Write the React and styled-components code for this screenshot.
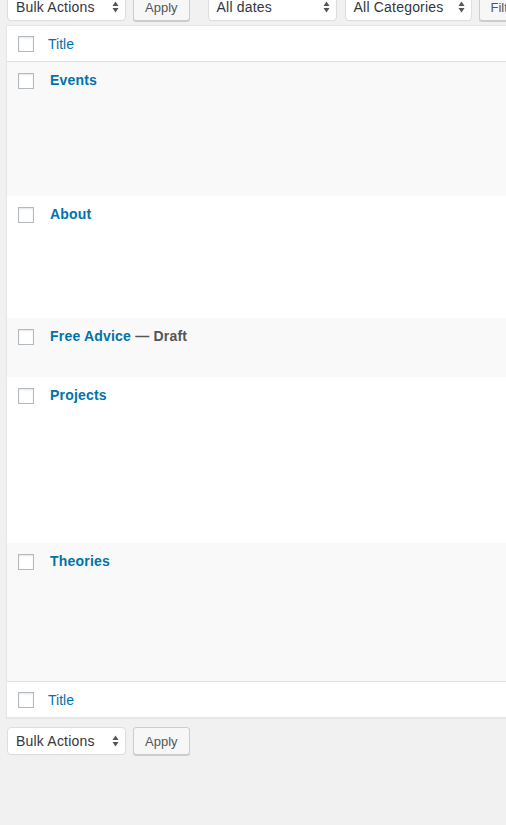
import React from 'react';
import styled, { createGlobalStyle } from 'styled-components';

const GlobalStyle = createGlobalStyle`
    html, body {
        margin: 0;
        padding: 0;
        background: #f1f1f1;
        overflow: hidden;
    }
    body {
        font-family: 'Liberation Sans', Arial, sans-serif;
        color: #444;
    }
`;

const rows = [
    { id: 1, title: 'Events', height: 134 },
    { id: 2, title: 'About', height: 122 },
    { id: 3, title: 'Free Advice', state: 'Draft', height: 59 },
    { id: 4, title: 'Projects', height: 166 },
    { id: 5, title: 'Theories', height: 138 },
];

const SelectArrows = () => (
    <svg width="7" height="12" viewBox="0 0 7 12">
        <path d="M3.5 0.5 L6.5 5 L0.5 5 Z" fill="#555" />
        <path d="M0.5 7 L6.5 7 L3.5 11.5 Z" fill="#555" />
    </svg>
);

const Dropdown = ({ label, width }) => (
    <Select width={width}>
        <span>{label}</span>
        <SelectArrows />
    </Select>
);

const App = () => {
    return (
        <Wrapper>
            <GlobalStyle />
            <TableNav top>
                <Group>
                    <Dropdown label="Bulk Actions" width={119} />
                    <Button>Apply</Button>
                </Group>
                <Group>
                    <Dropdown label="All dates" width={129} />
                    <Dropdown label="All Categories" width={127} />
                    <Button>Filter</Button>
                </Group>
            </TableNav>

            <Table>
                <HeadRow>
                    <CheckCell><Checkbox /></CheckCell>
                    <HeadTitle>Title</HeadTitle>
                </HeadRow>

                {rows.map((row, i) => (
                    <Row key={row.id} alt={i % 2 === 0} style={{ height: row.height }}>
                        <CheckCell row><Checkbox /></CheckCell>
                        <RowTitle>
                            <TitleLink>{row.title}</TitleLink>
                            {row.state && <PostState> — {row.state}</PostState>}
                        </RowTitle>
                    </Row>
                ))}

                <FootRow>
                    <CheckCell><Checkbox /></CheckCell>
                    <HeadTitle>Title</HeadTitle>
                </FootRow>
            </Table>

            <TableNav>
                <Group>
                    <Dropdown label="Bulk Actions" width={119} />
                    <Button>Apply</Button>
                </Group>
            </TableNav>
        </Wrapper>
    );
};

// Styled Components
const Wrapper = styled.div`
    width: 540px;
    min-height: 100vh;
`;

const TableNav = styled.div`
    display: flex;
    gap: 18px;
    height: 28px;
    padding-left: 7px;
    margin: ${props => props.top ? '-7px 0 4px' : '9px 0 0'};
`;

const Group = styled.div`
    display: flex;
    gap: 7px;
`;

const Select = styled.div`
    box-sizing: border-box;
    width: ${props => props.width}px;
    height: 28px;
    display: flex;
    align-items: center;
    justify-content: space-between;
    padding: 0 6px 0 8px;
    background: #fff;
    border: 1px solid #ddd;
    border-radius: 4px;
    box-shadow: 0 1px 1px -1px rgba(0, 0, 0, 0.1);
    font-size: 14px;
    letter-spacing: 0.2px;
    color: #32373c;

    & + & {
        margin-left: 1px;
    }
`;

const Button = styled.div`
    box-sizing: border-box;
    height: 28px;
    padding: 0 11px;
    display: flex;
    align-items: center;
    background: #f7f7f7;
    border: 1px solid #ccc;
    border-radius: 3px;
    box-shadow: 0 1px 0 #ccc;
    font-size: 13px;
    color: #555;
`;

const Table = styled.div`
    margin-left: 6px;
    background: #fff;
    border: 1px solid #e5e5e5;
    box-shadow: 0 1px 1px rgba(0, 0, 0, 0.04);
`;

const HeadRow = styled.div`
    display: flex;
    align-items: center;
    height: 35px;
    border-bottom: 1px solid #e1e1e1;
`;

const FootRow = styled(HeadRow)`
    border-bottom: none;
    border-top: 1px solid #e1e1e1;
`;

const Row = styled.div`
    display: flex;
    align-items: flex-start;
    box-sizing: border-box;
    background: ${props => props.alt ? '#f9f9f9' : '#fff'};
`;

const CheckCell = styled.div`
    width: 41px;
    display: flex;
    padding-left: 11px;
    box-sizing: border-box;
    padding-top: ${props => props.row ? '11px' : '0'};
`;

const Checkbox = styled.span`
    display: block;
    box-sizing: border-box;
    width: 16px;
    height: 16px;
    background: #fff;
    border: 1px solid #b4b9be;
    box-shadow: inset 0 1px 2px rgba(0, 0, 0, 0.1);
`;

const HeadTitle = styled.div`
    font-size: 14px;
    color: #0073aa;
`;

const RowTitle = styled.div`
    padding: 9px 0 0 2px;
    font-size: 14px;
    line-height: 19px;
    font-weight: 700;
    letter-spacing: 0.2px;
`;

const TitleLink = styled.span`
    color: #0073aa;
`;

const PostState = styled.span`
    color: #555;
`;

export default App;
